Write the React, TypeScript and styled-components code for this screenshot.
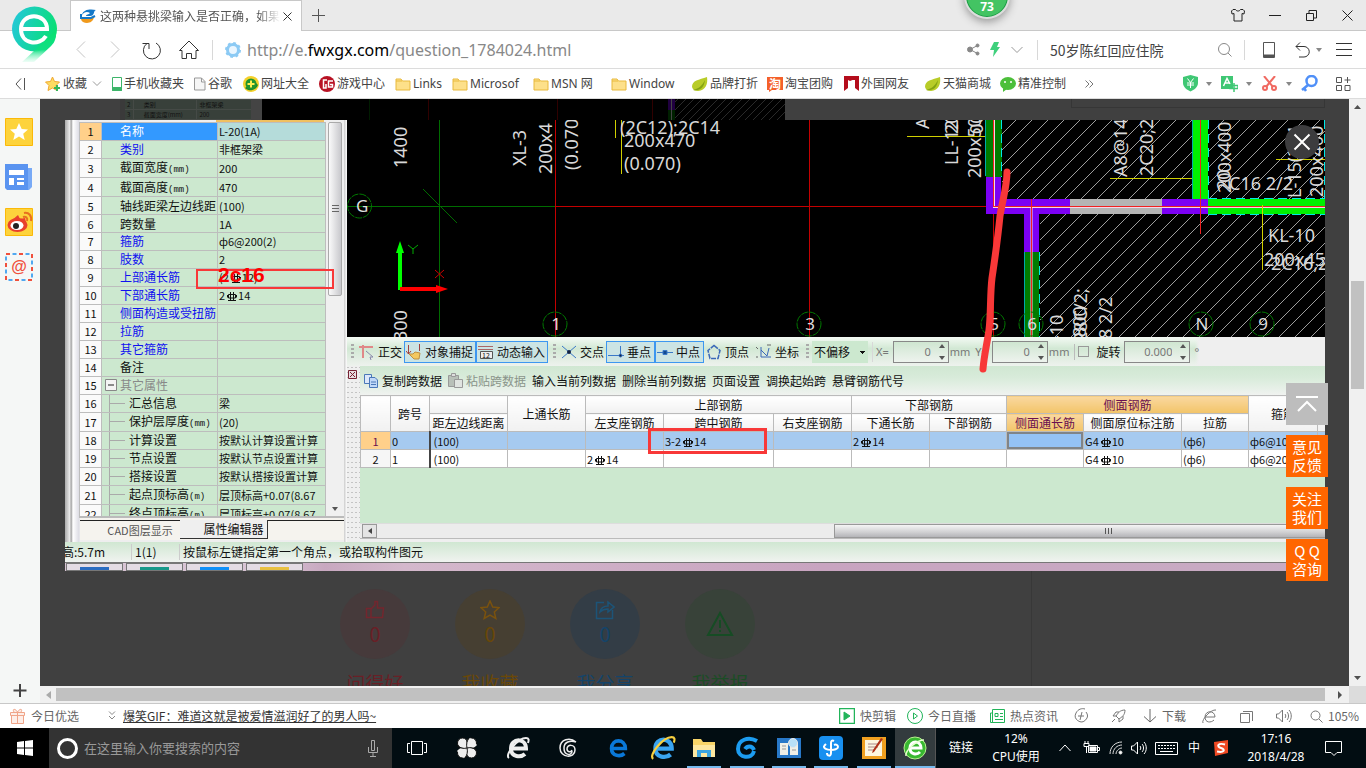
import React from 'react';
import styled, { createGlobalStyle, css } from 'styled-components';

const CJK = `'Noto Sans CJK SC', sans-serif`;
const UI = `'Noto Sans', 'Noto Sans CJK SC', sans-serif`;

const Global = createGlobalStyle`
  * { box-sizing: border-box; }
  body { margin: 0; background: #404040; font: 12px/16px ${CJK}; color: #333; overflow: hidden; }
  button { border: 0; padding: 0; background: none; font: inherit; color: inherit; cursor: pointer; }
  input, select { font: inherit; color: inherit; }
  a { color: inherit; text-decoration: none; }
  svg { display: block; flex: none; }
`;

type IconProps = { w?: number; h?: number; vb?: string; c?: string; sw?: number; children: React.ReactNode };
const Icon = ({ w = 16, h = w, vb = `0 0 ${w} ${h}`, c = '#444', sw = 1, children }: IconProps) => (
  <svg width={w} height={h} viewBox={vb} fill="none" stroke={c} strokeWidth={sw} aria-hidden="true">{children}</svg>
);

const Screen = styled.div`
  display: flex;
  flex-direction: column;
  height: 100vh;
  position: relative;
`;

/* ---------- browser chrome ---------- */
const TabStrip = styled.header`
  display: flex;
  height: 31px;
  padding-left: 70px;
  background: #eaeaea;
  border-bottom: 1px solid #c8c8c8;
  position: relative;
  flex: none;
`;
const Tab = styled.div`
  display: flex;
  align-items: center;
  gap: 3px;
  width: 232px;
  height: 31px;
  padding: 0 9px 0 9px;
  background: #fff;
  border: 1px solid #c8c8c8;
  border-bottom: 0;
  color: #555;
`;
const TabTitle = styled.span`
  flex: 1;
  overflow: hidden;
  white-space: nowrap;
  mask-image: linear-gradient(90deg, #000 88%, transparent);
`;
const ChromeButton = styled.button<{ $w?: number }>`
  display: flex;
  align-items: center;
  justify-content: center;
  width: ${p => p.$w ?? 36}px;
  height: 30px;
  flex: none;
`;
const Grow = styled.div`flex: 1; min-width: 0;`;
const Ball = styled.div`
  position: absolute;
  right: 356px;
  top: -27px;
  width: 46px;
  height: 46px;
  border-radius: 50%;
  border: 2px solid #ddd;
  background: #43c463;
  box-shadow: inset 0 0 0 1px #1c9a45, 0 3px 8px #999;
  color: #fff;
  font: bold 12px/16px ${UI};
  text-align: center;
  padding-top: 24px;
`;
const Logo = styled.div`
  position: absolute;
  left: 10px;
  top: 5px;
  z-index: 2;
`;
const NavBar = styled.nav`
  display: flex;
  align-items: center;
  height: 38px;
  padding: 0 3px 0 64px;
  background: #fff;
  border-bottom: 1px solid #dcdcdc;
  flex: none;
`;
const Rule = styled.i`width: 1px; height: 20px; background: #d8d8d8; flex: none;`;
const Url = styled.div`
  flex: 1;
  font: 16px/22px ${UI};
  color: #888;
  white-space: nowrap;
  overflow: hidden;
  b { font-weight: 400; color: #000; }
`;
const SearchInput = styled.input`
  width: 159px;
  border: 0;
  outline: 0;
  padding: 0 0 0 3px;
  color: #444;
  font: 14px/20px ${CJK};
`;
const Bookmarks = styled.nav`
  display: flex;
  align-items: center;
  height: 30px;
  background: #fff;
  border-bottom: 1px solid #dcdcdc;
  padding: 0 0 0 12px;
  flex: none;
  color: #444;
`;
const Bookmark = styled.a<{ $w: number }>`
  display: flex;
  align-items: center;
  gap: 2px;
  width: ${p => p.$w}px;
  white-space: nowrap;
  flex: none;
  font: 12px/16px ${UI};
`;

/* ---------- body ---------- */
const Body = styled.div`display: flex; flex: 1; min-height: 0;`;
const Sidebar = styled.aside`
  display: flex;
  flex-direction: column;
  align-items: flex-start;
  gap: 17px;
  width: 40px;
  padding: 19px 0 4px 5px;
  background: #f5f7f6;
  flex: none;
`;
const PlusButton = styled.button`margin: auto 0 0 8px;`;
const Frame = styled.div`display: flex; flex-direction: column; flex: 1; min-width: 0;`;
const FrameRow = styled.div`display: flex; flex: 1; min-height: 0;`;
const Viewport = styled.main`
  display: flex;
  flex-direction: column;
  flex: 1;
  min-width: 0;
  position: relative;
  overflow: hidden;
  background: #404040;
`;
const VBar = styled.div`
  display: flex;
  flex-direction: column;
  align-items: center;
  justify-content: space-between;
  width: 17px;
  padding: 6px 0;
  background: #f0f0f0;
  position: relative;
`;
const VThumb = styled.div`position: absolute; top: 182px; left: 2px; right: 2px; height: 108px; background: #c1c1c1;`;
const HBar = styled.div`
  display: flex;
  align-items: center;
  height: 17px;
  background: #f0f0f0;
  gap: 5px;
  padding-left: 6px;
  flex: none;
`;
const HThumb = styled.div`flex: 1; height: 13px; background: #c1c1c1;`;
const Corner = styled.div`width: 17px; height: 17px; background: #dcdcdc;`;

const Peek = styled.div`display: flex; height: 21px; padding-left: 80px; overflow: hidden; flex: none;`;
const PeekTable = styled.table`
  width: 142px;
  table-layout: fixed;
  border-collapse: collapse;
  font: 6px/8px ${CJK};
  color: #111;
  background: #38403a;
  border-left: 5px solid #3a3a3a;
  border-right: 11px solid #444;
  td { padding: 0 2px; border: 1px solid #454a46; white-space: nowrap; overflow: hidden; height: 10px; }
  td:nth-child(2) { padding-left: 10px; }
`;
const PeekBox = styled.div`
  width: 254px;
  height: 9px;
  margin: 0 24px 0 auto;
  border: 1px solid #363636;
  border-top: 0;
`;

const Lightbox = styled.section`
  display: flex;
  flex-direction: column;
  height: 451px;
  margin: 0 24px 0 25px;
  overflow: hidden;
  position: relative;
  background: #efefef;
  color: #111;
  flex: none;
`;
const Work = styled.div`display: flex; height: 422px;`;
const PropPanel = styled.div`display: flex; width: 282px; flex: none; background: linear-gradient(90deg, #aaa, #eee 5px, #999 6px, #fff 8px, #dcdce4 14px, #eee 15px);`;
const PropInner = styled.div`
  display: flex;
  flex-direction: column;
  width: 265px;
  margin-left: 14px;
`;
const PropTop = styled.div`height: 2px; margin: 0 20px 0 137px; background: #f0c060;`;
const PropView = styled.div`display: flex; height: 396px; overflow: hidden; border-bottom: 2px solid #bbb;`;
const PropTable = styled.table`
  width: 246px;
  height: 402px;
  table-layout: fixed;
  border-collapse: collapse;
  background: #cce8cf;
  flex: none;
  th, td { padding: 0; border: 1px solid #bdbdbd; font-weight: 400; line-height: 16px; white-space: nowrap; overflow: hidden; text-align: left; }
  th { background: #fafafa; text-align: center; font-size: 11px; }
  td:last-child { font-size: 11px; padding-left: 1px; }
`;
const NameCell = styled.td<{ $tone?: string; $sub?: boolean; $group?: boolean }>`
  && { padding-left: ${p => (p.$sub ? 27 : p.$group ? 3 : 18)}px; color: ${p => p.$tone ?? '#111'}; }
  ${p => p.$sub && 'background: linear-gradient(#aaa, #aaa) 7px 0 / 1px 100% no-repeat, linear-gradient(#aaa, #aaa) 7px 50% / 16px 1px no-repeat;'}
  small { font: 9px/12px 'Liberation Mono', monospace; }
`;
const GroupLabel = styled.span`display: flex; align-items: center; gap: 3px;`;
const PropRow = styled.tr<{ $on?: boolean }>`
  ${p => p.$on && css`
    th { background: #ffd08a; }
    td { background: #b5dcda; }
    ${NameCell} { background: #3399ff; color: #fff; }
  `}
`;
const PropScroll = styled.div`
  display: flex;
  flex-direction: column;
  align-items: center;
  justify-content: space-between;
  width: 18px;
  padding-bottom: 5px;
  background: #f0f0f0;
`;
const PropThumb = styled.div`
  display: flex;
  align-items: center;
  justify-content: center;
  width: 14px;
  height: 174px;
  border: 1px solid #aaa;
  border-radius: 2px;
  background: linear-gradient(90deg, #fafafa, #c8c8cc);
`;
const PropTabs = styled.div`display: flex; height: 22px; padding-top: 2px; margin-left: 1px; background: #f5f3ee; color: #555;`;
const PropTab = styled.button<{ $on?: boolean }>`
  width: ${p => (p.$on ? 88 : 100)}px;
  height: 19px;
  padding-left: 20px;
  font-size: ${p => (p.$on ? 12 : 11)}px;
  line-height: 16px;
  color: ${p => (p.$on ? '#111' : '#555')};
  border-top: ${p => (p.$on ? 0 : '1px solid #222')};
  ${p => p.$on && 'background: #efefef; border-right: 1px solid #333; border-bottom: 1px solid #333;'}
`;
const TabsEnd = styled.div`flex: 1; border-top: 1px solid #222;`;
const Side = styled.div`width: 3px; background: linear-gradient(90deg, #ccc, #fff);`;

const CadColumn = styled.div`display: flex; flex-direction: column; flex: 1; min-width: 0;`;
const SnapBar = styled.div`
  display: flex;
  align-items: center;
  height: 29px;
  padding-left: 2px;
  background: linear-gradient(90deg, transparent 848px, #efefef 852px), linear-gradient(#f4faf4, #d2e8d4 40%, #eef2ee);
  overflow: hidden;
  flex: none;
  color: #111;
`;
const Handle = styled.i<{ $ml?: number }>`
  width: 3px;
  height: 15px;
  margin: 0 3px 0 ${p => p.$ml ?? 2}px;
  background: repeating-linear-gradient(#aaa 0 2px, transparent 2px 4px);
  flex: none;
`;
const Snap = styled.button<{ $w: number; $on?: boolean }>`
  display: flex;
  align-items: center;
  gap: 3px;
  width: ${p => p.$w}px;
  height: 22px;
  padding: 0 1px;
  border: 1px solid ${p => (p.$on ? '#3d97f0' : 'transparent')};
  background: ${p => (p.$on ? '#cbe4e4' : 'none')};
  white-space: nowrap;
  flex: none;
  font-size: 12px;
`;
const OffsetSelect = styled.select`
  appearance: none;
  width: 56px;
  height: 22px;
  margin-right: 4px;
  padding: 0 0 0 2px;
  border: 0;
  font-size: 12px;
  color: #111;
  background: linear-gradient(#111, #111) 48px 10px / 5px 1px no-repeat, linear-gradient(#111, #111) 49px 11px / 3px 1px no-repeat, linear-gradient(#111, #111) 50px 12px / 1px 1px no-repeat, #cce8cf;
`;
const Spin = styled.label<{ $w: number; $ml?: number }>`
  display: flex;
  align-items: center;
  gap: 4px;
  margin-left: ${p => p.$ml ?? 3}px;
  color: #777;
  font: 11px/16px ${UI};
  flex: none;
  span { position: relative; display: block; }
  input { display: block; width: ${p => p.$w}px; height: 22px; padding: 0 17px 0 0; text-align: right; border: 1px solid #888; background: linear-gradient(#cfe6d1, #eef3ee); }
  svg { position: absolute; right: 4px; top: 3px; }
`;
const Check = styled.label`
  display: flex;
  align-items: center;
  gap: 7px;
  margin-left: 5px;
  padding-left: 3px;
  border-left: 1px solid #bbb;
  flex: none;
  input { appearance: none; width: 11px; height: 11px; margin: 0; border: 1px solid #999; }
`;
const Lower = styled.div`display: flex; flex: 1; min-height: 0;`;
const Grip = styled.div`
  width: 13px;
  padding: 4px 1px;
  flex: none;
  background: radial-gradient(circle, #c4c4c4 1px, transparent 1px) 3px 14px / 4px 5px, #efefef;
`;
const SpanPanel = styled.div`display: flex; flex-direction: column; flex: 1; min-width: 0;`;
const SpanBar = styled.div`
  display: flex;
  align-items: center;
  gap: 6px;
  height: 29px;
  padding: 0 0 0 3px;
  background: linear-gradient(#d0e7d2, #d8ebda 40%, #f0f3f0);
  white-space: nowrap;
  flex: none;
`;
const SpanButton = styled.button<{ $off?: boolean }>`
  display: flex;
  align-items: center;
  gap: 3px;
  font-size: 12px;
  color: ${p => (p.$off ? '#8a948a' : '#111')};
`;
const GridView = styled.div`flex: 1; overflow: hidden; background: #cce8cf;`;
const Grid = styled.table`
  width: 1037px;
  table-layout: fixed;
  border-collapse: collapse;
  background: #fff;
  th, td { padding: 0; height: 18px; border: 1px solid #bbb; border-top-width: 0; font-weight: 400; font-size: 12px; line-height: 16px; white-space: nowrap; overflow: hidden; }
  thead th { background: linear-gradient(#fff, #f1f1f1); border-top-width: 1px; }
  tbody th { font-size: 11px; background: #f6f6f6; }
  td { padding-left: 1px; font-size: 11px; }
  td:nth-child(2) { border-right: 2px solid #444; }
  td:nth-child(3) { padding-left: 3px; }
`;
const HotHead = styled.th`&& { background: linear-gradient(#fad8a0, #f2c468); color: #6a1050; }`;
const ActiveRow = styled.tr`td { background: #a6caf0; } && th { background: #ffd08a; color: #6a1050; }`;
const ActiveCell = styled.td`&& { background: #94c2f5; box-shadow: inset 0 0 0 2px #808488; }`;
const GridScroll = styled.div`
  display: flex;
  align-items: center;
  justify-content: space-between;
  height: 16px;
  margin-bottom: 3px;
  padding-left: 2px;
  background: #ececec;
  border-top: 1px solid #ddd;
  border-bottom: 1px solid #bbb;
  flex: none;
`;
const ScrollBtn = styled.button`display: flex; align-items: center; justify-content: center; width: 15px; height: 14px; border: 1px solid #999; background: #e4e4e4;`;
const GridThumb = styled.div`
  display: flex;
  align-items: center;
  justify-content: center;
  width: 51%;
  padding-left: 58px;
  height: 14px;
  border: 1px solid #999;
  border-right: 0;
  background: linear-gradient(#f5f5f5, #d0d0d2 60%, #b4b4b8);
`;
const StatusRow = styled.div`
  display: flex;
  align-items: center;
  height: 21px;
  background: linear-gradient(#d0e7d2, #f0f3f0);
  border-bottom: 1px solid #777;
  flex: none;
  white-space: nowrap;
`;
const StatusCell = styled.div<{ $w?: number }>`
  width: ${p => (p.$w ? `${p.$w}px` : 'auto')};
  padding-left: 3px;
  overflow: hidden;
  border-right: ${p => (p.$w ? '1px solid #ccc' : 0)};
  &:first-child { text-indent: -6px; }
`;
const MiniTaskbar = styled.div`
  display: flex;
  gap: 3px;
  height: 8px;
  padding-left: 1px;
  background: linear-gradient(90deg, #d8c4d4 200px, #c8a8c0 260px, #d4b8cc 340px, #c8a4c0 60%, #c8acc4);
`;
const MiniButton = styled.div<{ $c: string }>`
  width: 57px;
  padding: 3px 13px 0;
  border: 1px solid #777;
  background: linear-gradient(90deg, ${p => p.$c}, ${p => p.$c}) content-box, #e4dce4;
`;
const Annotations = styled.svg`position: absolute; left: 0; top: 0; pointer-events: none;`;
const CloseButton = styled.button`
  position: absolute;
  right: 6px;
  top: 5px;
  display: flex;
  align-items: center;
  justify-content: center;
  width: 34px;
  height: 34px;
  border-radius: 50%;
  background: #3c3c3e;
`;

const Actions = styled.div`display: flex; flex: 1; gap: 45px; padding: 18px 0 0 300px; position: relative; overflow: hidden; width: 992px; border-right: 1px solid #383838;`;
const Action = styled.button<{ $bg: string; $c: string }>`
  display: flex;
  flex-direction: column;
  align-items: center;
  width: 70px;
  height: 110px;
  color: ${p => p.$c};
  font: 19px/28px ${CJK};
  gap: 10px;
  white-space: nowrap;
  flex: none;
  span { display: flex; flex-direction: column; align-items: center; justify-content: center; width: 70px; height: 70px; border-radius: 50%; background: ${p => p.$bg}; font-size: 20px; }
`;
const Floats = styled.div`position: absolute; right: 21px; top: 284px; display: flex; flex-direction: column; gap: 10px;`;
const Float = styled.button<{ $top?: boolean }>`
  display: flex;
  align-items: center;
  justify-content: center;
  width: 42px;
  height: 42px;
  background: ${p => (p.$top ? '#bdbdbd' : '#ff6600')};
  color: #fff;
  font: 15px/18px ${CJK};
`;

/* ---------- footer bars ---------- */
const StatusBar = styled.footer`
  display: flex;
  align-items: center;
  height: 25px;
  padding: 0 4px 0 9px;
  background: #fff;
  border-top: 1px solid #c8c8c8;
  color: #555;
  flex: none;
`;
const Foot = styled.a<{ $w: number; $u?: boolean }>`
  display: flex;
  align-items: center;
  gap: 5px;
  width: ${p => p.$w}px;
  white-space: nowrap;
  flex: none;
  color: ${p => (p.$u ? '#333' : '#666')};
  text-decoration: ${p => (p.$u ? 'underline' : 'none')};
`;
const Taskbar = styled.footer`
  display: flex;
  height: 40px;
  padding-right: 16px;
  background: #020d12;
  color: #fff;
  flex: none;
`;
const Start = styled.button`display: flex; align-items: center; justify-content: center; width: 49px; background: #000;`;
const Cortana = styled.label`
  display: flex;
  align-items: center;
  gap: 5px;
  width: 343px;
  padding: 0 13px 0 7px;
  background: #333;
  input { flex: 1; min-width: 0; border: 0; outline: 0; padding: 0; background: none; font: 13px/18px ${CJK}; }
  input::placeholder { color: #999; opacity: 1; }
`;
const Task = styled.button<{ $w: number; $run?: boolean; $on?: boolean }>`
  display: flex;
  align-items: center;
  justify-content: center;
  width: ${p => p.$w}px;
  flex: none;
  ${p => p.$run && 'background: linear-gradient(#76b9ed, #76b9ed) center bottom / 34px 2px no-repeat;'}
  ${p => p.$on && 'background: linear-gradient(#76b9ed, #76b9ed) center bottom / 100% 2px no-repeat, #333b3e; border-right: 1px solid #555;'}
`;
const TrayText = styled.div<{ $w: number }>`
  display: flex;
  flex-direction: column;
  align-items: center;
  justify-content: center;
  width: ${p => p.$w}px;
  font: 12px/18px ${UI};
  flex: none;
  white-space: nowrap;
`;

/* ---------- small drawings ---------- */
const Folder = () => <Icon w={16} c="#e8b93c"><path d="M1 3h5l1.500 2H15v9H1z" fill="#fde08a" /><path d="M1 5h6" /></Icon>;
const Leaf = () => <Icon w={17} h={16} c="none"><path d="M1 11C1 4 8 4 16 1c1 7-1 13-9 14-3 0-5-1-6-4z" fill="#b8cc28" /><path d="M2 14c5-1 9-4 12-10-1 8-5 11-12 10z" fill="#84a312" /></Icon>;
const Caret = () => <Icon w={6} h={4} c="none"><path d="M0 0h6L3 4z" fill="#888" /></Icon>;
const Steppers = () => <Icon w={6} h={16} c="none"><path d="M0 4h6L3 0zM0 12h6l-3 4z" fill="#555" /></Icon>;
const RebarSvg = styled.svg`&& { display: inline-block; vertical-align: -1px; margin: 0 1px 0 2px; }`;
const Rebar = () => (
  <RebarSvg width={10} height={9} viewBox="0 0 10 9" fill="none" stroke="#111" strokeWidth={1} role="img" aria-label="三级钢">
    <path d="M3.500 0v8.500M6.500 0v8.500M1 8.500h8M1.500 2.500h7v3.500h-7zM.5 3v2.500M9.500 3v2.500" />
  </RebarSvg>
);
const Minus = () => <Icon w={12} h={12} c="#888"><path d="M.5.500h11v11H.5z" fill="#f4f4f4" /><path d="M3 6h6" stroke="#222" /></Icon>;
const EGlyph = ({ s = 24, a = '#2f9be8', ring }: { s?: number; a?: string; ring?: string }) => (
  <Icon w={s} vb="0 0 24 24" c={a} sw={4}>
    <path d="M5 12.500h15c0-11-15-11-15 0 0 9 10 9 14 5.500" />
    {ring && <path d="M3 22C-2 19 12 2 20 2c3 0 3 2 2 5" stroke={ring} strokeWidth={2} />}
  </Icon>
);

/* ---------- data ---------- */
const BLUE = '#1010f0';
type Prop = { name: string; unit?: string; value?: React.ReactNode; tone?: string; sub?: boolean; group?: boolean };
const props: Prop[] = [
  { name: '名称', value: 'L-20(1A)', tone: '#fff' },
  { name: '类别', value: '非框架梁', tone: BLUE },
  { name: '截面宽度', unit: '(mm)', value: '200' },
  { name: '截面高度', unit: '(mm)', value: '470' },
  { name: '轴线距梁左边线距', value: '(100)' },
  { name: '跨数量', value: '1A' },
  { name: '箍筋', value: 'ф6@200(2)', tone: BLUE },
  { name: '肢数', value: '2', tone: BLUE },
  { name: '上部通长筋', value: <>(2<Rebar />12)</>, tone: BLUE },
  { name: '下部通长筋', value: <>2<Rebar />14</>, tone: BLUE },
  { name: '侧面构造或受扭筋', tone: BLUE },
  { name: '拉筋', tone: BLUE },
  { name: '其它箍筋', tone: BLUE },
  { name: '备注' },
  { name: '其它属性', tone: '#888', group: true },
  { name: '汇总信息', value: '梁', sub: true },
  { name: '保护层厚度', unit: '(mm)', value: '(20)', sub: true },
  { name: '计算设置', value: '按默认计算设置计算', sub: true },
  { name: '节点设置', value: '按默认节点设置计算', sub: true },
  { name: '搭接设置', value: '按默认搭接设置计算', sub: true },
  { name: '起点顶标高', unit: '(m)', value: '层顶标高+0.07(8.67', sub: true },
  { name: '终点顶标高', unit: '(m)', value: '层顶标高+0.07(8.67', sub: true },
];
const gridCols = [30, 39, 78, 78, 78, 110, 78, 78, 77, 77, 98, 67, 69, 80];

const marks: { w: number; label: string; icon: React.ReactNode }[] = [
  { w: 82, label: '手机收藏夹', icon: <Icon w={10} h={16} c="#3db56a"><path d="M.5 1.500h9v13h-9z" /><path d="M.5 11.500h9v3h-9z" fill="#3db56a" /></Icon> },
  { w: 49, label: '谷歌', icon: <Icon w={12} h={16} c="#999"><path d="M.5 2h7L11 5.500V14H.5zM7.500 2v4H11" fill="#f6f6f6" /></Icon> },
  { w: 76, label: '网址大全', icon: <Icon c="none"><circle cx={8} cy={8} r={8} fill="#f4d02a" /><path d="M2 12A8 8 0 0 0 15 9l-4-4z" fill="#1e8a2a" /><circle cx={8} cy={8} r={5.500} fill="#23952e" /><path d="M8 4.500v7M4.500 8h7" stroke="#ffef50" strokeWidth={2} /></Icon> },
  { w: 76, label: '游戏中心', icon: <Icon c="#fff" sw={1.500}><circle cx={8} cy={8} r={8} fill="#b81224" stroke="none" /><path d="M8 4H4.500v8H7V8M14 5H9.500v6h4V8.500H11" /></Icon> },
  { w: 57, label: 'Links', icon: <Folder /> },
  { w: 81, label: 'Microsof', icon: <Folder /> },
  { w: 78, label: 'MSN 网', icon: <Folder /> },
  { w: 80, label: 'Window', icon: <Folder /> },
  { w: 76, label: '品牌打折', icon: <Leaf /> },
  { w: 77, label: '淘宝团购', icon: <Icon c="none"><path d="M0 1h16v13H5l-3 2v-2H0z" fill="#f4602a" /><text x={2} y={13} fontSize={12} fontWeight="bold" fill="#fff">淘</text></Icon> },
  { w: 80, label: '外国网友', icon: <Icon w={15} h={16} c="none"><path d="M0 0h15v15l-4-3V4H8.500L6 5 4 4v8l-4 3z" fill="#b40c1c" /></Icon> },
  { w: 76, label: '天猫商城', icon: <Leaf /> },
  { w: 85, label: '精准控制', icon: <Icon c="none"><ellipse cx={8} cy={7.500} rx={8} ry={6.500} fill="#4cbf3a" /><path d="M3 12v4l4-3z" fill="#4cbf3a" /><circle cx={5} cy={6} r={1} fill="#fff" /><circle cx={11} cy={6} r={1} fill="#fff" /></Icon> },
];

const bubbles: [number, string][] = [[555, '1'], [809, '3'], [993, '5'], [1031, '6'], [1201, 'N'], [1262, '9']];
const vTexts: [number, number, string][] = [
  [407, 168, '1400'], [407, 341, '300'], [526, 166, 'XL-3'], [552, 174, '200x4'], [578, 170, '(0.070'],
  [929, 129, 'A'], [958, 165, 'LL-12'], [958, 134, '20'], [981, 178, '200x50'], [983, 134, '00'], [1127, 177, 'A8@14'], [1153, 176, '2C20;2'],
  [1231, 193, '200x400'], [1230, 190, '20'], [1301, 198, 'L-15(2C1'], [1323, 197, '200x400'], [1063, 341, '-10'], [1086, 337, '800'], [1087, 342, '28C/2;'], [1112, 339, '8 2/2'],
];
const hTexts: [number, number, string][] = [
  [620, 134, '(2C12);2C14'], [624, 147, '200x470'], [624, 170, '(0.070)'],
  [1229, 190, 'C16 2/2'], [1268, 242, 'KL-10'], [1264, 266, '200x45'], [1271, 270, '2C16,2'],
];

const CadCanvas = () => (
  <svg width="100%" height={217} viewBox="347 120 978 217" preserveAspectRatio="xMinYMin slice" fontFamily="Noto Sans, sans-serif" fontSize={18} fill="none" role="img" aria-label="梁平面图">
    <defs>
      <pattern id="hatch" width={16} height={16} patternUnits="userSpaceOnUse"><path d="M-1 17L17-1" stroke="#9c9c9c" /></pattern>
    </defs>
    <path d="M347 120h978v217H347z" fill="#000" />
    <path d="M1002 120h191v79h-191zM1208 120h117v79h-117zM1040 214h285v123h-285z" fill="url(#hatch)" />
    <path d="M439.500 120v217M347 206.500h208M423 189l34 34" stroke="#006c00" />
    <path d="M555.500 120v217M809.500 120v217M555 206.500h431M993.500 206v131" stroke="#c40000" />
    <path d="M615.500 120v18M621.500 120v54M907 136.500h87M1110 178.500h86M1276 159.500h49M1262.500 214v56" stroke="#d0d000" />
    <path d="M986 120h16v57h-16zM1024 252h15v85h-15z" fill="#007c00" />
    <path d="M986 177h15v22h69v15h-31v38h-15v-38h-38zM1162 199h46v15h-46z" fill="#7c00f4" />
    <path d="M1070 199h92v15h-92z" fill="#b4b4b4" />
    <path d="M1193 120h15v79h-15zM1208 199h117v15h-117z" fill="#00f000" />
    <path d="M985.500 120v56M1024.500 252v85M1192.500 120v79" stroke="#0aa" />
    <path d="M1001.500 120v57M1039.500 252v85M1208.500 120v79M1208 198.500h117M1208 214.500h117M1324.500 120v79" stroke="#00e8e8" strokeDasharray="9 5" />
    <path d="M994 120v87M1031.500 207v130M993 207h332" stroke="#f4d8e8" strokeWidth={2} />
    <path d="M993.500 120v86M993 206.500h332M1031.500 199v138M1200.500 120v114" stroke="#f02020" />
    <path d="M1262.500 205v65" stroke="#d0d000" />
    <circle cx={359.500} cy={206} r={12} stroke="#007800" strokeDasharray="7 1" />
    {bubbles.map(([x, t]) => (
      <g key={x} fontSize={17}><circle cx={x} cy={324} r={12} stroke="#007800" strokeDasharray="7 1" /><text x={x + 1} y={330} textAnchor="middle" fill="#ddd">{t}</text></g>
    ))}
    <text x={356} y={212} fontSize={17} fill="#ddd">G</text>
    <path d="M400 290v-40" stroke="#0f0" strokeWidth={4} /><path d="M396 253l4-12 4 12z" fill="#0f0" />
    <path d="M400 289h38" stroke="#f00" strokeWidth={4} /><path d="M436 285l12 4-12 4z" fill="#f00" />
    <path d="M408 245l5 4 5-4M413 249v5" stroke="#0a0" /><path d="M435 270l9 8M444 270l-9 8" stroke="#c00" />
    <g fill="#d8d8d8">
      {hTexts.map(([x, y, t]) => <text key={x + t + y} x={x} y={y}>{t}</text>)}
      {vTexts.map(([x, y, t], i) => <text key={i} transform={`translate(${x} ${y}) rotate(-90)`}>{t}</text>)}
    </g>
  </svg>
);

const PropertyPanel = () => (
  <PropPanel>
    <PropInner>
      <PropTop />
      <PropView>
        <PropTable>
          <colgroup><col width={22} /><col width={116} /><col width={108} /></colgroup>
          <tbody>
            {props.map((p, i) => (
              <PropRow key={i} $on={i === 0}>
                <th scope="row">{i + 1}</th>
                <NameCell $tone={p.tone} $sub={p.sub} $group={p.group}>
                  {p.group ? <GroupLabel><Minus />{p.name}</GroupLabel> : p.name}
                  {p.unit && <small>{p.unit}</small>}
                </NameCell>
                <td>{p.value}</td>
              </PropRow>
            ))}
          </tbody>
        </PropTable>
        <PropScroll>
          <PropThumb><Icon w={7} h={8} c="#666"><path d="M0 .5h7M0 3.500h7M0 6.500h7" /></Icon></PropThumb>
          <Icon w={6} h={4} c="none"><path d="M0 0h6L3 4z" fill="#555" /></Icon>
        </PropScroll>
      </PropView>
      <PropTabs role="tablist">
        <PropTab role="tab">CAD图层显示</PropTab>
        <PropTab role="tab" $on>属性编辑器</PropTab>
        <TabsEnd />
      </PropTabs>
    </PropInner>
    <Side />
  </PropPanel>
);

const SnapTools = () => (
  <SnapBar>
    <Handle />
    <Snap $w={47}><Icon c="#e08888" sw={2}><path d="M0 3h14M4 1v13" /><path d="M7 7l7 6-3 0 1 3" stroke="#88a" strokeWidth={1} /></Icon>正交</Snap>
    <Snap $w={72} $on><Icon c="#a04040"><path d="M2.500 1v9M0 7l2.500 3L5 7M13.500 0v7" /><path d="M3 10l5 5h5l1-6-5-1-2 2z" fill="#f4c860" stroke="#c09040" /></Icon>对象捕捉</Snap>
    <Snap $w={72} $on><Icon c="#a66"><path d="M0 2.500h15M0 5.500h15" /><path d="M2.500 7.500h12v7h-12z" stroke="#555" fill="#eee" /><text x={4} y={14} fontSize={7} fill="#111" stroke="none">12</text></Icon>动态输入</Snap>
    <Handle $ml={5} />
    <Snap $w={47}><Icon c="#3a78c8"><path d="M1 2l14 12M15 2L1 14" /><circle cx={8} cy={8} r={2} fill="#124" stroke="none" /></Icon>交点</Snap>
    <Snap $w={49} $on><Icon c="#3a78c8"><path d="M0 11.500h16M12.500 2v9" /><circle cx={12.500} cy={11.500} r={1.500} fill="#124" /></Icon>垂点</Snap>
    <Snap $w={49} $on><Icon c="#3a78c8"><path d="M0 8.500h16" /><path d="M6 6.500h4v4H6z" fill="#124a90" /></Icon>中点</Snap>
    <Snap $w={50}><Icon c="#3a68b8"><path d="M8 1.500l6 5-2 8H4l-2-8z" strokeWidth={1.500} strokeDasharray="5 1" /></Icon>顶点</Snap>
    <Snap $w={46}><Icon c="#3a68b8"><path d="M5 3v10h10M5 6l6 6 2-8" /><path d="M0 3l2 2M0 13h2M11 1h4" stroke="#666" /></Icon>坐标</Snap>
    <Handle $ml={6} />
    <OffsetSelect aria-label="偏移方式"><option>不偏移</option></OffsetSelect>
    <Rule />
    <Spin $w={56} $ml={3}>X= <span><input defaultValue="0" aria-label="X" /><Steppers /></span></Spin>
    <Spin as="span" $w={0} $ml={1}>mm</Spin>
    <Spin $w={56} $ml={5}>Y= <span><input defaultValue="0" aria-label="Y" /><Steppers /></span></Spin>
    <Spin as="span" $w={0} $ml={1}>mm</Spin>
    <Check><input type="checkbox" />旋转</Check>
    <Spin $w={66} $ml={4}><span><input defaultValue="0.000" aria-label="旋转角度" /><Steppers /></span>°</Spin>
  </SnapBar>
);

const SpanGrid = () => (
  <Grid>
    <colgroup>{gridCols.map((w, i) => <col key={i} width={w} />)}</colgroup>
    <thead>
      <tr>
        <th rowSpan={2} /><th rowSpan={2}>跨号</th><th /><th rowSpan={2}>上通长筋</th><th colSpan={3}>上部钢筋</th>
        <th colSpan={2}>下部钢筋</th><HotHead colSpan={3}>侧面钢筋</HotHead><th rowSpan={2}>箍筋</th><th rowSpan={2} />
      </tr>
      <tr>
        <th>距左边线距离</th><th>左支座钢筋</th><th>跨中钢筋</th><th>右支座钢筋</th><th>下通长筋</th><th>下部钢筋</th>
        <HotHead>侧面通长筋</HotHead><th>侧面原位标注筋</th><th>拉筋</th>
      </tr>
    </thead>
    <tbody>
      <ActiveRow>
        <th>1</th><td>0</td><td>(100)</td><td /><td /><td>3-2<Rebar />14</td><td /><td>2<Rebar />14</td><td /><ActiveCell />
        <td>G4<Rebar />10</td><td>(ф6)</td><td>ф6@100/20</td><td />
      </ActiveRow>
      <tr>
        <th>2</th><td>1</td><td>(100)</td><td /><td>2<Rebar />14</td><td /><td /><td /><td /><td />
        <td>G4<Rebar />10</td><td>(ф6)</td><td>ф6@200(2)</td><td />
      </tr>
    </tbody>
  </Grid>
);

export default function App() {
  return (
    <Screen>
      <Global />
      <Logo>
        <svg width={50} height={58} viewBox="0 0 50 58">
          <defs>
            <linearGradient id="lg" x1="0" y1="0.300" x2="1" y2="0.600"><stop offset="0" stopColor="#22c8d8" /><stop offset="1" stopColor="#08e070" /></linearGradient>
            <linearGradient id="tail" x1="0" y1="0" x2="0" y2="1"><stop offset="0" stopColor="#08e070" /><stop offset="0.600" stopColor="#10e084" /><stop offset="1" stopColor="#a8f8d4" stopOpacity={0.200} /></linearGradient>
          </defs>
          <circle cx={24.500} cy={24} r={22.500} fill="url(#lg)" />
          <path d="M12 57l12-11 21-20 1 5c-1 6-3 8-6 11L24 57z" fill="url(#tail)" />
          <path d="M13 24h24c0-17-26-17-26 0 0 16 19 17 25 7" fill="none" stroke="#fff" strokeWidth={4} />
        </svg>
      </Logo>
      <TabStrip>
        <Tab>
          <Icon w={17} h={16} c="none"><path d="M2 7c1-6 9-6 14-5-3 1-1 6-6 6H6c0-2 3-1 4-3C7 3 4 4 2 7z" fill="#1478c8" /><path d="M1 9c2 2 6 3 13 0-1 6-7 7-11 5-2-1-2-3-2-5z" fill="#f09a1c" /><path d="M1 6v4h10l4-2" stroke="#1478c8" strokeWidth={2} /></Icon>
          <TabTitle>这两种悬挑梁输入是否正确，如果</TabTitle>
          <button aria-label="关闭标签"><Icon w={9} c="#333"><path d="M.5.500l8 8M8.500.500l-8 8" /></Icon></button>
        </Tab>
        <ChromeButton $w={33} aria-label="新标签"><Icon w={13} c="#555"><path d="M6.500 0v13M0 6.500h13" /></Icon></ChromeButton>
        <Grow />
        <Ball>73</Ball>
        <ChromeButton $w={37} aria-label="皮肤"><Icon w={14} c="#222"><path d="M4.500 1.500c1 2 4 2 5 0H12l1.500 1.500-.5 3-2-.5v7.500H3V5.500L1 6 .5 3 2 1.500z" /></Icon></ChromeButton>
        <ChromeButton $w={37} aria-label="最小化"><Icon w={12} c="#222"><path d="M0 6.500h12" /></Icon></ChromeButton>
        <ChromeButton aria-label="还原"><Icon w={11} c="#222"><path d="M.5 3.500h7v7h-7zM3 3V.5h7.500V8H8" /></Icon></ChromeButton>
        <ChromeButton $w={37} aria-label="关闭"><Icon w={11} c="#222"><path d="M.5.500l10 10M10.500.500l-10 10" /></Icon></ChromeButton>
      </TabStrip>
      <NavBar>
        <ChromeButton $w={34} aria-label="后退"><Icon w={10} h={17} c="#c4c4c4"><path d="M9 .5l-8 8 8 8" /></Icon></ChromeButton>
        <ChromeButton $w={34} aria-label="前进"><Icon w={10} h={17} c="#c4c4c4"><path d="M1 .5l8 8-8 8" /></Icon></ChromeButton>
        <ChromeButton $w={39} aria-label="刷新"><Icon w={20} c="#333"><path d="M5 3.500a8.500 8.500 0 1 0 9-.5M.5 3.500H7V9" /></Icon></ChromeButton>
        <ChromeButton aria-label="主页"><Icon w={20} c="#333"><path d="M.5 10.500L10 1l9.500 9.500H17v8h-4.500v-5h-5v5H3v-8z" /></Icon></ChromeButton>
        <ChromeButton $w={11} as="span"><Rule /></ChromeButton>
        <ChromeButton $w={29} as="span"><Icon w={16} c="#8ccaf4" sw={3}><circle cx={8} cy={8} r={5.500} fill="#eaf6ff" /><circle cx={8} cy={8} r={7} strokeWidth={2} strokeDasharray="2.750 2.750" /></Icon></ChromeButton>
        <Url role="textbox" aria-label="地址" tabIndex={0}>http://e.<b>fwxgx.com</b>/question_1784024.html</Url>
        <ChromeButton $w={22} aria-label="分享"><Icon w={13} c="#888"><circle cx={3} cy={6.500} r={2.500} fill="#888" /><circle cx={10.500} cy={2.500} r={1.500} fill="#888" /><circle cx={10.500} cy={10.500} r={1.500} fill="#888" /><path d="M3 6.500l7.500-4M3 6.500l7.500 4" /></Icon></ChromeButton>
        <ChromeButton $w={22} aria-label="极速模式"><Icon w={10} h={15} c="none"><path d="M4 0h5L7 5h3L3 15l1-7H0z" fill="#3fd07c" /></Icon></ChromeButton>
        <ChromeButton $w={22} aria-label="更多"><Icon w={12} h={8} c="#999"><path d="M.5 1L6 6.500 11.500 1" /></Icon></ChromeButton>
        <ChromeButton $w={19} as="span"><Rule /></ChromeButton>
        <SearchInput defaultValue="50岁陈红回应住院" aria-label="搜索" />
        <ChromeButton $w={38} aria-label="搜索"><Icon w={14} c="#888"><circle cx={6} cy={6} r={5.500} /><path d="M10 10l3.500 3.500" /></Icon></ChromeButton>
        <Rule />
        <ChromeButton $w={48} aria-label="手机"><Icon w={12} h={16} c="#555"><path d="M.5.500h11v15H.5z" /><path d="M1 13h10v2H1z" fill="#555" /></Icon></ChromeButton>
        <ChromeButton $w={20} aria-label="恢复"><Icon w={16} c="#333"><path d="M5 .5l-4 4 4 4M1 4.500h8a5 5 0 1 1 0 10.500H4" /></Icon></ChromeButton>
        <ChromeButton $w={12} aria-label="恢复列表"><Caret /></ChromeButton>
        <ChromeButton $w={38} aria-label="菜单"><Icon w={16} h={13} c="#333"><path d="M0 .5h16M0 6.500h16M0 12.500h16" /></Icon></ChromeButton>
      </NavBar>
      <Bookmarks>
        <Bookmark href="#" $w={33} aria-label="收起"><Icon w={14} h={12} c="#555"><path d="M9 .5L4 6l5 5.500M12.500 0v12" /></Icon></Bookmark>
        <Bookmark href="#" $w={67}>
          <Icon w={16} c="#f0a830"><path d="M7.500 1l2 4.500 5 .5-3.500 3.500 1 5-4.500-2.500L3 14.500l1-5L.5 6l5-.5z" fill="#fddc62" /><path d="M12 9v6M9 12h6" stroke="#35b55a" strokeWidth={2} /></Icon>收藏
          <Icon w={13} h={6} c="#999"><path d="M4 .5L8 4.500l4-4" /></Icon>
        </Bookmark>
        {marks.map(m => <Bookmark href="#" key={m.label} $w={m.w}>{m.icon}{m.label}</Bookmark>)}
        <Icon w={8} h={8} c="#777"><path d="M.5.500L4 4 .5 7.500M4.500.500L8 4 4.500 7.500" /></Icon>
        <Grow />
        <ChromeButton $w={20} aria-label="网银"><Icon w={17} c="#fff"><path d="M8.500 0L16 2v6c0 4-4 7-7.500 8.500C5 15 1 12 1 8V2z" fill="#3fc774" stroke="none" /><path d="M5.500 3.500l3 4 3-4M5 8h7M5 10h7M8.500 7.500V13" /></Icon></ChromeButton>
        <ChromeButton $w={18} as="span"><Caret /></ChromeButton>
        <ChromeButton $w={22} aria-label="翻译"><Icon w={18} c="#fff"><path d="M1 1h12v13H1z" fill="#3fc774" stroke="none" /><path d="M3.500 11L7 3.500 10 9M5 8h4" strokeWidth={1.500} /><path d="M14 8v9M10 10.500h8v3h-8z" stroke="#3fc774" strokeWidth={1.500} /></Icon></ChromeButton>
        <ChromeButton $w={18} as="span"><Caret /></ChromeButton>
        <ChromeButton $w={22} aria-label="截图"><Icon w={15} c="#f06a62" sw={2}><path d="M2 0l9 11M13 0L4 11" /><circle cx={3} cy={12} r={2} /><circle cx={12} cy={12} r={2} /></Icon></ChromeButton>
        <ChromeButton $w={18} as="span"><Caret /></ChromeButton>
        <ChromeButton $w={22} aria-label="密码"><Icon w={17} c="#5090f8" sw={2.500}><circle cx={10.500} cy={6} r={5} /><path d="M7 10l-6 5M3 13l2 3" /></Icon></ChromeButton>
        <ChromeButton $w={46} aria-label="扩展"><Icon w={15} c="#555"><path d="M.5 1.500h5v5h-5zM.5 9.500h5v5h-5zM9 9.500h5v5H9zM11.500 1v6M8.500 4h6" /></Icon></ChromeButton>
      </Bookmarks>

      <Body>
        <Sidebar>
          <Icon w={28} c="#fbb908"><path d="M.5.500h27v27H.5z" fill="#fdd33c" /><path d="M14 5l2.700 6 6.300.5-4.800 4.200 1.500 6.300-5.700-3.400L8.300 22l1.500-6.300L5 11.500l6.300-.5z" fill="#fff" stroke="none" /></Icon>
          <Icon w={28} c="none"><path d="M0 1h23v26H2l-2-2z" fill="#5a94f0" /><path d="M23 5h4v19l-3 3H23z" fill="#78aaf6" /><path d="M4 7h15v5H4zM4 15h5v7H4zM12 15h7v2h-7zM12 19h7v3h-7z" fill="#fff" /></Icon>
          <Icon w={28} c="#fbb908"><path d="M.5.500h27v27H.5z" fill="#fdd33c" /><ellipse cx={12.500} cy={17} rx={10} ry={7} fill="#e8402c" stroke="none" /><path d="M6 13l7-6 2 4 5-1 1 5" fill="#e8402c" stroke="none" /><ellipse cx={12} cy={17.500} rx={6.500} ry={4.500} fill="#fff" stroke="none" /><circle cx={11} cy={18} r={3} fill="#222" stroke="none" /><path d="M18 9c3-1 5 1 4 4M19 5c5-1 8 3 7 8" stroke="#e87020" strokeWidth={2} /></Icon>
          <Icon w={28} c="#f0503c" sw={2}><path d="M1 1h26v26H1z" strokeDasharray="4 9" /><path d="M1 1h26v26H1z" stroke="#50a8f0" strokeDasharray="4 9" strokeDashoffset={6.500} /><text x={14} y={19} textAnchor="middle" fontSize={16} fontWeight="bold" fontFamily="Liberation Sans" fill="#f0503c" stroke="none">@</text></Icon>
          <PlusButton aria-label="添加"><Icon w={14} h={18} c="#444" sw={2}><path d="M7 3v13M.5 9.500h13" /></Icon></PlusButton>
        </Sidebar>
        <Frame>
          <FrameRow>
            <Viewport>
              <Peek>
                <PeekTable>
                  <colgroup><col width={10} /><col width={60} /><col width={56} /></colgroup>
                  <tbody>
                    <tr><td>2</td><td>类别</td><td>非框架梁</td></tr>
                    <tr><td>3</td><td>截面宽度(mm)</td><td>200</td></tr>
                  </tbody>
                </PeekTable>
                <svg width={523} height={21} fill="none">
                  <defs><pattern id="dim" width={8} height={8} patternUnits="userSpaceOnUse"><path d="M-1 9L9-1" stroke="#2a2a2a" /></pattern></defs>
                  <path d="M0 0h523v21H0z" fill="#000" /><path d="M413 0h110v21H413z" fill="url(#dim)" />
                  <path d="M107.500 0v21" stroke="#001c00" /><path d="M166.500 0v21M295.500 0v21M390.500 0v21" stroke="#300000" />
                  <path d="M406 0h7v11h-7z" fill="#200040" /><path d="M406 11h7v10h-7z" fill="#002000" /><path d="M409.500 0v21" stroke="#444" />
                </svg>
                <PeekBox />
              </Peek>
              <Lightbox>
                <Work>
                  <PropertyPanel />
                  <CadColumn>
                    <CadCanvas />
                    <SnapTools />
                    <Lower>
                      <Grip><Icon w={9} c="#723"><path d="M.5.500h8v8h-8z" fill="#e8dce0" /><path d="M2 2l5 5M7 2L2 7" /></Icon></Grip>
                      <SpanPanel>
                        <SpanBar>
                          <SpanButton><Icon w={16} c="#4a78b8"><path d="M1.500 1.500h7v9h-7z" fill="#dce8fa" /><path d="M6.500 4.500H12l2.500 2.500v7.500h-8z" fill="#c0d8f8" /><path d="M8 9h5M8 11.500h5" /></Icon>复制跨数据</SpanButton>
                          <SpanButton $off><Icon w={15} c="#999"><path d="M.5 2.500h10v11H.5z" fill="#b8c0b8" /><path d="M3.500.500h4v3h-4z" fill="#ddd" /><path d="M6.500 6.500h8v8h-8z" fill="#e0e4e0" /></Icon>粘贴跨数据</SpanButton>
                          <SpanButton>输入当前列数据</SpanButton>
                          <SpanButton>删除当前列数据</SpanButton>
                          <SpanButton>页面设置</SpanButton>
                          <SpanButton>调换起始跨</SpanButton>
                          <SpanButton>悬臂钢筋代号</SpanButton>
                        </SpanBar>
                        <GridView><SpanGrid /></GridView>
                        <GridScroll>
                          <ScrollBtn aria-label="向左滚动"><Icon w={4} h={6} c="none"><path d="M4 0v6L0 3z" fill="#444" /></Icon></ScrollBtn>
                          <GridThumb><Icon w={8} h={6} c="#555"><path d="M.5 0v6M3.500 0v6M6.500 0v6" /></Icon></GridThumb>
                        </GridScroll>
                      </SpanPanel>
                    </Lower>
                  </CadColumn>
                </Work>
                <StatusRow>
                  <StatusCell $w={67}>高:5.7m</StatusCell>
                  <StatusCell $w={48}>1(1)</StatusCell>
                  <StatusCell>按鼠标左键指定第一个角点，或拾取构件图元</StatusCell>
                </StatusRow>
                <MiniTaskbar>
                  <MiniButton $c="#2a6cc0" /><MiniButton $c="#18988a" /><MiniButton $c="#1090f8" /><MiniButton $c="#e8c040" />
                </MiniTaskbar>
                <Annotations width={1260} height={451} viewBox="65 120 1260 451" fill="none" stroke="#f83838">
                  <path d="M197 270h136v18H197z" strokeWidth={2} />
                  <path d="M649.500 429.500h116v23h-116z" strokeWidth={3} />
                  <path d="M1007 172c0 14-4 26-7 44-2 20-5 42-8 62-2 16-1 36-3 52-2 14-5 26-6 39" strokeWidth={7} strokeLinecap="round" strokeLinejoin="round" />
                  <text x={218} y={282} fontFamily="Liberation Sans, sans-serif" fontWeight="bold" fontSize={21} fill="#f00" stroke="none">2c16</text>
                </Annotations>
                <CloseButton aria-label="关闭图片"><Icon w={18} c="#fff" sw={2}><path d="M1.500 1.500l15 15M16.500 1.500l-15 15" /></Icon></CloseButton>
              </Lightbox>
              <Actions>
                <Action $bg="#463a3b" $c="#6a1f26"><span><Icon w={20} c="#74262e" sw={1.500}><path d="M1.500 8.500H6v9H1.500zM6 9l4-4V1.500h2.500V8h6l-1 9.500H6" /></Icon>0</span>问得好</Action>
                <Action $bg="#463f32" $c="#6a4808"><span><Icon w={20} c="#7a520e" sw={1.500}><path d="M10 1l2.700 6 6.300.700-4.700 4.300 1.500 6.500L10 15.200 4.200 18.500 5.700 12 1 7.700 7.300 7z" /></Icon>0</span>我收藏</Action>
                <Action $bg="#333d46" $c="#14446a"><span><Icon w={20} c="#1c5478" sw={1.500}><path d="M9 2.500H1.500v16h16V10M5 12c1-5 4-6 8-6V2l6 5-6 5V9c-4 0-6 1-8 3z" /></Icon>0</span>我分享</Action>
                <Action $bg="#384239" $c="#1c4c26"><span><Icon w={28} h={26} c="#164c24" sw={2}><path d="M14 2l12 22H2zM14 9v8M14 19v2" /></Icon></span>我举报</Action>
              </Actions>
              <Floats>
                <Float $top aria-label="回到顶部"><Icon w={22} h={18} c="#fff" sw={2}><path d="M0 2h22M2 16l9-9 9 9" /></Icon></Float>
                <Float>意见<br />反馈</Float>
                <Float>关注<br />我们</Float>
                <Float>Q Q<br />咨询</Float>
              </Floats>
            </Viewport>
            <VBar>
              <Icon w={7} h={4} c="none"><path d="M0 4h7L3.500 0z" fill="#505050" /></Icon>
              <VThumb />
              <Icon w={7} h={4} c="none"><path d="M0 0h7L3.500 4z" fill="#505050" /></Icon>
            </VBar>
          </FrameRow>
          <HBar>
            <Icon w={5} h={8} c="none"><path d="M5 0v8L0 4z" fill="#aaa" /></Icon>
            <HThumb />
            <Icon w={14} h={8} c="none"><path d="M8 0v8l4-4z" fill="#505050" /></Icon>
            <Corner />
          </HBar>
        </Frame>
      </Body>

      <StatusBar>
        <Foot href="#" $w={99}><Icon w={17} c="#f0a488"><path d="M1.500 4.500h14v3h-14zM2.500 7.500h12v8h-12zM8.500 4v12M8.500 4C6 0 3 1 5 4M8.500 4c2.500-4 5.500-3 3.500 0" fill="#fdeee8" /></Icon>今日优选</Foot>
        <Icon w={15} h={10} c="#888"><path d="M1 .5l3 3 3-3M1 5l3 3 3-3" /></Icon>
        <Foot href="#" $w={270} $u>爆笑GIF：难道这就是被爱情滋润好了的男人吗~</Foot>
        <Grow />
        <Foot href="#" $w={68}><Icon w={16} c="#22b45a"><path d="M.5.500h15v15H.5z" strokeWidth={1.500} /><path d="M5 4l6 4-6 4z" fill="#22b45a" /></Icon>快剪辑</Foot>
        <Foot href="#" $w={82}><Icon w={16} c="#22b45a"><circle cx={8} cy={8} r={7.500} /><path d="M6.500 5l4 3-4 3z" /></Icon>今日直播</Foot>
        <Foot href="#" $w={84}><Icon w={16} c="#22b45a"><path d="M3.500 1.500h12v13H1.500V5h2zM3.500 5v9M6 5.500h3v3H6zM11 5.500h3M11 8.500h3M6 11.500h8" /></Icon>热点资讯</Foot>
        <Foot href="#" $w={38} aria-label="加速"><Icon w={16} c="#777"><path d="M13 4A6 6 0 1 1 3 5c2-4 6-5 9-4M5 8h6M9 4L7 12" /></Icon></Foot>
        <Foot href="#" $w={32} aria-label="火箭"><Icon w={16} c="#777"><path d="M14 2c-5 0-7 3-9 6l3 3c3-2 6-4 6-9zM5 8L2 8l3-4h3M8 11v3l4-3V8M4 11l-3 3" /></Icon></Foot>
        <Foot href="#" $w={59}><Icon w={14} h={14} c="#666"><path d="M7 0v13M1 7.500L7 13l6-5.500" /></Icon><span>下载</span></Foot>
        <Foot href="#" $w={38} aria-label="兼容"><Icon w={15} c="#777"><path d="M3 8h10c0-7-10-7-10 0 0 6 6 6 9 3M1 14C-1 11 9 0 14 1" /></Icon></Foot>
        <Foot href="#" $w={36} aria-label="窗口"><Icon w={13} c="#777"><path d="M.5 3.500h9v9h-9zM3 1.500h9.500V11" /></Icon></Foot>
        <Foot href="#" $w={34} aria-label="声音"><Icon w={16} h={14} c="#777"><path d="M.5 5v4h2l4 4V1l-4 4zM9 5c1 1 1 3 0 4M11 3c2 2 2 6 0 8M13 1c3 3 3 9 0 12" /></Icon></Foot>
        <Foot href="#" $w={52}><Icon w={13} c="#777"><circle cx={5.500} cy={5.500} r={4.500} /><path d="M9 9l3.500 3.500" /></Icon>105%</Foot>
      </StatusBar>

      <Taskbar>
        <Start aria-label="开始"><Icon w={16} c="none"><path d="M0 2l7-1v6.500H0zM8 1l8-1v7.500H8zM0 8.500h7V15l-7-1zM8 8.500h8V16l-8-1z" fill="#fff" /></Icon></Start>
        <Cortana>
          <Icon w={23} c="#fff" sw={3}><circle cx={11.500} cy={11.500} r={9} /></Icon>
          <input placeholder="在这里输入你要搜索的内容" aria-label="搜索 Windows" />
          <Icon w={12} h={17} c="#aaa"><path d="M4.500.500h3v10h-3zM1.500 7v5.500h9V7M6 12.500v4M3 16.500h6" /></Icon>
        </Cortana>
        <Task $w={49} aria-label="任务视图"><Icon w={20} h={14} c="#fff"><path d="M4.500.500h11v13h-11zM3 2.500H.5v9H3M17 2.500h2.500v9H17" /></Icon></Task>
        <Task $w={51} aria-label="风扇"><Icon w={22} c="#111"><circle cx={6.500} cy={6} r={5} fill="#eee" /><circle cx={15.500} cy={6} r={5} fill="#eee" /><circle cx={6.500} cy={16} r={5} fill="#eee" /><circle cx={15.500} cy={16} r={5} fill="#eee" /><path d="M3 8c3-2 6 0 8 3 0-4 1-7 4-9M19 14c-3 2-6 0-8-3 0 4-1 7-4 9M11 11c3 0 6-1 9-4M11 11c-3 0-6 1-9 4" stroke="#eee" strokeWidth={3} /><path d="M11 11c-1-4 0-7 2-10M11 11c1 4 0 7-2 10M11 11C7 12 4 11 1 9M11 11c4-1 7 0 10 2" /></Icon></Task>
        <Task $w={51} aria-label="浏览器"><EGlyph s={24} a="#eee" ring="#eee" /></Task>
        <Task $w={49} aria-label="漩涡"><Icon w={20} c="#eee" sw={1.500}><path d="M18 4C12-1 2 1 2 10c0 10 15 11 15 2 0-6-8-6-8-1 0 3 4 4 5 1M18 4C12 2 6 4 6 10c0 8 8 8 8 3" /></Icon></Task>
        <Task $w={51} aria-label="Edge"><EGlyph s={22} a="#0a78d8" /></Task>
        <Task $w={39} aria-label="IE"><EGlyph s={26} a="#3aa4f0" ring="#f8d040" /></Task>
        <Task $w={43} $run aria-label="文件"><Icon w={22} h={20} c="none"><path d="M0 1h8l2 3h12v15H0z" fill="#f8d468" /><path d="M0 7h22v12H0z" fill="#fde7a0" /><path d="M4 19v-7h14v7h-4v-4H8v4z" fill="#3ca4e0" /></Icon></Task>
        <Task $w={43} $run aria-label="浏览"><Icon w={24} c="#1c9cf0" sw={4}><path d="M22 5C13 0 3 4 3 13c0 9 14 11 16 2M10 13c2-3 7-4 9 1" /></Icon></Task>
        <Task $w={42} $run aria-label="文档"><Icon w={24} c="none"><path d="M0 2h24v20H0z" fill="#2878c8" /><path d="M3 7h8v12H3zM13 7h8v12h-8z" fill="#f0f0e8" /><circle cx={16} cy={7} r={4.500} fill="#b8e0f8" stroke="#e8e8e8" /><path d="M5 10h4M5 13h4M15 14h4" stroke="#999" /></Icon></Task>
        <Task $w={42} $run aria-label="云"><Icon w={24} c="#fff" sw={2}><rect width={24} height={24} rx={4} fill="#1890f0" stroke="none" /><path d="M15 5c-2-1-3 0-3 2v10c0 4-4 3-4 0M5 10c-1 5 14 5 14 1 0-2-2-3-4-2M5 10l2-2" /></Icon></Task>
        <Task $w={43} $run aria-label="记事"><Icon w={24} c="none"><path d="M0 1h24v22H0z" fill="#f0a020" /><path d="M3 4h17v16H3z" fill="#fdf6e0" /><path d="M6 8h10M6 11h10M6 14h7" stroke="#a88" /><path d="M21 3l-9 13-2 1 1-3 8-12z" fill="#b03018" /></Icon></Task>
        <Task $w={41} $on aria-label="360浏览器"><Icon w={24} c="#fff" sw={3}><circle cx={12} cy={12} r={11} fill="#38b830" stroke="#b8f090" strokeWidth={1} /><path d="M7 12h11c0-8-11-8-11 0 0 7 7 7 10 4" /><path d="M3 20C2 14 14 4 21 4" stroke="#e8ffd0" strokeWidth={1.500} /></Icon></Task>
        <Grow />
        <TrayText $w={40}>链接</TrayText>
        <TrayText $w={70}><span>12%</span><span>CPU使用</span></TrayText>
        <Task $w={28} aria-label="更多图标"><Icon w={12} h={8} c="#fff"><path d="M.5 7L6 1l5.500 6" /></Icon></Task>
        <Task $w={24} aria-label="电池"><Icon w={17} h={14} c="#fff"><path d="M5.500 4.500h9v7h-9zM15 6.500h1.500v3H15M1 2.500h5v3H1zM2 0v2M5 0v2M3.500 6v6" /><path d="M7 6h6v4H7z" fill="#fff" /></Icon></Task>
        <Task $w={25} aria-label="网络"><Icon w={14} h={14} c="#ddd"><path d="M1 13C1 6 6 1 13 1M4 13c0-5 4-9 9-9M7 13c0-3 3-6 6-6" /><circle cx={11.500} cy={11.500} r={1.500} fill="#fff" /></Icon></Task>
        <Task $w={22} aria-label="音量"><Icon w={16} h={14} c="#fff"><path d="M.5 5v4h2l4 4V1l-4 4zM9 5c1 1 1 3 0 4M11 3c2 2 2 6 0 8M13 1c3 3 3 9 0 12" /></Icon></Task>
        <Task $w={32} aria-label="键盘"><Icon w={23} h={13} c="#fff"><path d="M.5.500h22v12H.5z" /><path d="M3 3.500h17M3 6.500h17" strokeDasharray="2 1" /><path d="M5 9.500h13" /></Icon></Task>
        <TrayText $w={24}>中</TrayText>
        <Task $w={30} aria-label="输入法"><Icon w={16} c="none"><path d="M1 2l14-2v13L2 16z" fill="#f04a24" /><path d="M12 4.500c-7-2-9 2-4 3.500s3 5-4 3.500" stroke="#fff" strokeWidth={2} /></Icon></Task>
        <TrayText $w={80}><span>17:16</span><span>2018/4/28</span></TrayText>
        <Task $w={34} aria-label="通知"><Icon w={17} h={17} c="#fff"><path d="M.5 1.500h16v11H12l-3 3-3-3H.5z" /></Icon></Task>
      </Taskbar>
    </Screen>
  );
}
